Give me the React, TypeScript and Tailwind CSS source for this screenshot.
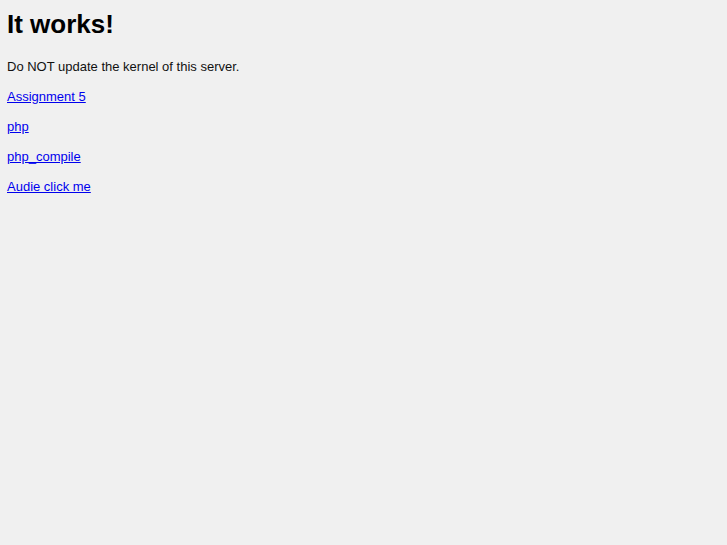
export default function App() {
  const links = ["Assignment 5", "php", "php_compile", "Audie click me"];

  return (
    <div className="min-h-screen bg-[#f0f0f0] px-[7px] py-2 text-[13px] text-[#111] [font-family:'Liberation_Sans',Arial,sans-serif]">
      <h1 className="mt-[1px] text-[26px] font-bold leading-[30px] text-black">It works!</h1>
      <p className="mt-[20px] leading-[15px]">Do NOT update the kernel of this server.</p>
      {links.map((l) => (
        <p key={l} className="mt-[15px] leading-[15px]">
          <a href="#" className="text-[#0000ee] underline">
            {l}
          </a>
        </p>
      ))}
    </div>
  );
}
